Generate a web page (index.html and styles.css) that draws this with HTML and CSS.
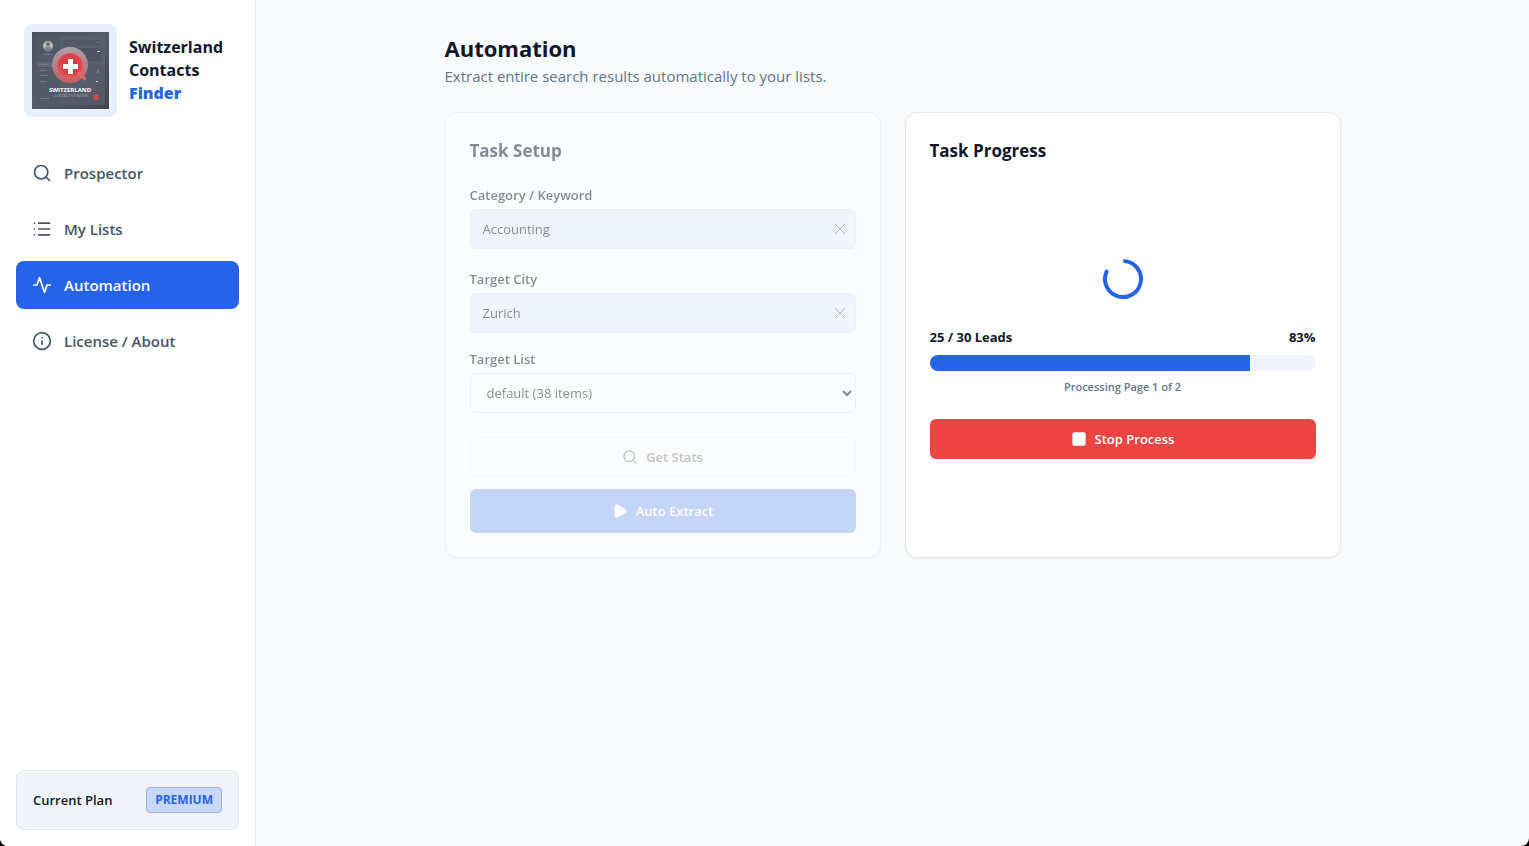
FILE: index.html
```html
<!DOCTYPE html>
<html lang="en">
<head>
<meta charset="UTF-8">
<meta name="viewport" content="width=device-width,initial-scale=1">
<title>Switzerland Contacts Finder</title>
<link rel="stylesheet" href="styles.css">
</head>
<body>
<div class="app">

<aside class="sidebar">
  <div class="brand">
    <div class="brand-logo">
      <svg viewBox="0 0 77 77" width="77" height="77" role="img" aria-label="Switzerland Contacts Finder logo">
        <defs>
          <linearGradient id="lgBg" x1="0" y1="0" x2="1" y2="1">
            <stop offset="0" stop-color="#4b5260"/><stop offset=".5" stop-color="#555b68"/><stop offset="1" stop-color="#40454f"/>
          </linearGradient>
          <radialGradient id="lgRed" cx=".5" cy=".45" r=".6">
            <stop offset="0" stop-color="#d0323a"/><stop offset=".6" stop-color="#dc4248"/><stop offset="1" stop-color="#e4686b"/>
          </radialGradient>
          <linearGradient id="lgGlass" x1="0" y1="0" x2="0" y2="1">
            <stop offset="0" stop-color="#b3acb4" stop-opacity=".9"/><stop offset="1" stop-color="#cf5c61" stop-opacity=".9"/>
          </linearGradient>
        </defs>
        <rect width="77" height="77" fill="url(#lgBg)"/>
        <rect x="4" y="4" width="69" height="69" rx="3" fill="#5c626f" opacity=".6"/>
        <rect x="4" y="4" width="24" height="69" rx="3" fill="#4f5562" opacity=".6"/>
        <rect x="31" y="8" width="37" height="5" rx="1" fill="#525865"/>
        <rect x="31" y="16" width="38" height="13" rx="2" fill="#4d535f"/>
        <rect x="50" y="33" width="19" height="14" rx="2" fill="#555b67"/>
        <rect x="6" y="30" width="18" height="5" rx="1" fill="#626873"/>
        <rect x="4" y="30" width="1" height="5" fill="#a0454e"/>
        <g fill="#737883">
          <rect x="8" y="32" width="8" height="1"/><rect x="8" y="38" width="7" height="1"/>
          <rect x="8" y="43" width="8" height="1"/><rect x="8" y="49" width="7" height="1"/>
          <rect x="8" y="66" width="9" height="1"/><rect x="11" y="22" width="10" height="1"/>
          <rect x="65" y="10" width="2" height="1"/><rect x="65" y="38" width="2" height="3"/>
        </g>
        <rect x="65" y="19" width="3" height="1" fill="#dfe1e5"/>
        <rect x="64" y="49" width="2" height="1" fill="#dfe1e5"/>
        <circle cx="16" cy="14" r="5" fill="#b9bcc2"/>
        <circle cx="16" cy="12" r="2" fill="#7b6a67"/>
        <path d="M12 17.500a4 3 0 0 1 8 0a5 5 0 0 1-8 0z" fill="#7f838c"/>
        <circle cx="38" cy="33" r="18" fill="url(#lgGlass)"/>
        <circle cx="38" cy="34" r="13" fill="url(#lgRed)"/>
        <path d="M47 41l6 6" stroke="#e4666a" stroke-width="3" stroke-linecap="round"/>
        <path d="M36 27h5v5h5v5h-5v5h-5v-5h-5v-5h5z" fill="#fff"/>
        <circle cx="64" cy="65" r="3" fill="#d0474d"/>
        <text class="logo-name" x="38" y="60" text-anchor="middle">SWITZERLAND</text>
        <text class="logo-sub" x="38" y="65" text-anchor="middle">CONTACTS FINDER</text>
      </svg>
    </div>
    <div class="brand-name">Switzerland<br>Contacts<br><span>Finder</span></div>
  </div>

  <nav class="nav">
    <a href="#prospector" class="nav-item">
      <svg class="icon" viewBox="0 0 24 24"><circle cx="11" cy="11" r="8"/><path d="m21 21-4.300-4.300"/></svg>
      Prospector
    </a>
    <a href="#lists" class="nav-item">
      <svg class="icon" viewBox="0 0 24 24"><path d="M8 5h13M8 12h13M8 19h13M3 5h.01M3 12h.01M3 19h.01"/></svg>
      My Lists
    </a>
    <a href="#automation" class="nav-item active">
      <svg class="icon" viewBox="0 0 24 24"><path d="M22 12h-4l-3 9L9 3l-3 9H2"/></svg>
      Automation
    </a>
    <a href="#about" class="nav-item">
      <svg class="icon" viewBox="0 0 24 24"><circle cx="12" cy="12" r="10"/><path d="M12 16v-4M12 8h.01"/></svg>
      License / About
    </a>
  </nav>

  <div class="plan">
    <span class="plan-label">Current Plan</span>
    <span class="plan-badge">PREMIUM</span>
  </div>
</aside>

<main class="main">
  <div class="content">
    <header class="page-head">
      <h1>Automation</h1>
      <p>Extract entire search results automatically to your lists.</p>
    </header>

    <div class="cards">
      <section class="card setup">
        <h2>Task Setup</h2>
        <form class="form">
          <div class="field">
            <label for="category">Category / Keyword</label>
            <div class="input-wrap">
              <input type="text" id="category" value="Accounting">
              <button type="button" class="clear" aria-label="Clear category"><svg viewBox="0 0 10 10" width="10" height="10"><path d="M0 0l10 10M10 0L0 10"/></svg></button>
            </div>
          </div>
          <div class="field">
            <label for="city">Target City</label>
            <div class="input-wrap">
              <input type="text" id="city" value="Zurich">
              <button type="button" class="clear" aria-label="Clear city"><svg viewBox="0 0 10 10" width="10" height="10"><path d="M0 0l10 10M10 0L0 10"/></svg></button>
            </div>
          </div>
          <div class="field">
            <label for="list">Target List</label>
            <select id="list"><option>default (38 items)</option></select>
          </div>
          <div class="actions">
            <button type="button" class="btn btn-outline" disabled>
              <svg class="icon" viewBox="0 0 24 24"><circle cx="11" cy="11" r="8"/><path d="m21 21-4.300-4.300"/></svg>
              Get Stats
            </button>
            <button type="button" class="btn btn-primary" disabled>
              <svg class="icon solid" viewBox="0 0 24 24"><path d="M5 5a2 2 0 0 1 3-1.700l12 7a2 2 0 0 1 0 3.400l-12 7A2 2 0 0 1 5 19z"/></svg>
              Auto Extract
            </button>
          </div>
        </form>
      </section>

      <section class="card">
        <h2>Task Progress</h2>
        <div class="progress">
          <svg class="spinner" viewBox="0 0 24 24"><path d="M13 3.060A9 9 0 1 1 3.800 8.300"/></svg>
          <div class="progress-row"><span>25 / 30 Leads</span><span>83%</span></div>
          <div class="bar"><div class="bar-fill" style="width:83%"></div></div>
          <p class="status">Processing Page 1 of 2</p>
          <button type="button" class="btn btn-stop">
            <svg class="icon solid" viewBox="0 0 24 24"><rect x="3" y="3" width="18" height="18" rx="2"/></svg>
            Stop Process
          </button>
        </div>
      </section>
    </div>
  </div>
</main>

</div>
</body>
</html>
```

FILE: styles.css
```css
:root{
  --brand:#2563eb;
  --bg:#f8fafc;
  --muted:#f1f5f9;
  --border:#e2e8f0;
  --text:#0f172a;
  --text2:#475569;
  --text3:#64748b;
  --danger:#ef4444;
  font-family:"Segoe UI","Open Sans","Noto Sans",sans-serif;
}
*{box-sizing:border-box;margin:0;padding:0}
html{background:#000}
body{color:var(--text);font-size:15px;line-height:24px}
button,input,select{font:inherit;color:inherit}
.app{display:flex;min-height:100vh;background:var(--bg);border-radius:0 0 8px 8px;overflow:hidden}

.icon{width:20px;height:20px;flex:none;fill:none;stroke:currentColor;stroke-width:2;stroke-linecap:round;stroke-linejoin:round}
.icon.solid{fill:currentColor}

/* sidebar */
.sidebar{width:256px;flex:none;background:#fff;border-right:1px solid var(--border);display:flex;flex-direction:column}
.brand{display:flex;align-items:center;gap:12px;padding:24px}
.brand-logo{flex:none;padding:8px;border-radius:8px;background:#e9effd}
.brand-logo svg{display:block}
.logo-name{font-size:6px;font-weight:700;fill:#fff}
.logo-sub{font-size:4px;fill:#a2a6af}
.brand-name{font-size:16px;font-weight:700;line-height:23px}
.brand-name span{color:var(--brand);font-weight:800}

.nav{flex:1;display:flex;flex-direction:column;gap:8px;padding:8px 16px}
.nav-item{display:flex;align-items:center;gap:12px;height:48px;padding:0 16px;border-radius:8px;color:var(--text2);font-weight:600;text-decoration:none}
.nav-item.active{background:var(--brand);color:#fff}

.plan{display:flex;align-items:center;justify-content:space-between;margin:16px;padding:16px;border:1px solid var(--border);border-radius:8px;background:var(--muted)}
.plan-label{font-size:13px;font-weight:600}
.plan-badge{padding:4px 8px;border:1px solid #92b1f5;border-radius:4px;background:#c8d8fa;color:var(--brand);font-size:12px;font-weight:700;line-height:16px}

/* main */
.main{flex:1;padding:32px}
.content{max-width:896px;margin:0 auto}
.page-head{margin-bottom:24px}
h1{font-size:22px;line-height:32px;font-weight:700}
.page-head p{color:var(--text3)}
.cards{display:grid;grid-template-columns:1fr 1fr;gap:24px}
.card{display:flex;flex-direction:column;padding:24px;background:#fff;border:1px solid var(--border);border-radius:12px;box-shadow:0 1px 2px rgba(0,0,0,.05)}
.card h2{font-size:17px;line-height:28px;font-weight:700;margin-bottom:16px}
.setup{opacity:.5}

/* form */
.form{display:flex;flex-direction:column;gap:16px;font-size:13px}
.field{display:flex;flex-direction:column;gap:4px}
.field:first-child{padding:4px 0}
.field label{font-weight:600;line-height:20px}
.input-wrap{position:relative}
.field input,.field select{display:block;width:100%;height:40px;padding:0 12px;border:1px solid var(--border);border-radius:6px;background:#fff}
.field input{background:#e8f0fe;padding-right:36px}
.clear{position:absolute;right:8px;top:12px;width:16px;height:16px;display:flex;align-items:center;justify-content:center;border:none;background:none;color:#64748b}
.clear svg{fill:none;stroke:currentColor;stroke-width:1}
.actions{display:flex;flex-direction:column;gap:12px;padding-top:8px}

.btn{display:flex;align-items:center;justify-content:center;gap:8px;width:100%;height:40px;border:none;border-radius:6px;font-size:13px;font-weight:600;cursor:pointer}
.btn:disabled{opacity:.5;cursor:default}
.btn .icon{width:16px;height:16px}
.btn-outline{background:#fff;border:1px solid var(--border)}
.btn-primary{height:44px;background:var(--brand);color:#fff}
.btn-stop{background:var(--danger);color:#fff}

/* progress */
.progress{flex:1;display:flex;flex-direction:column;align-items:center;justify-content:center}
.spinner{width:48px;height:48px;margin-bottom:24px;fill:none;stroke:var(--brand);stroke-width:2;stroke-linecap:round}
.progress-row{display:flex;justify-content:space-between;width:100%;margin-bottom:8px;font-size:13px;line-height:20px;font-weight:700}
.bar{width:100%;height:16px;border-radius:8px;background:var(--muted);overflow:hidden}
.bar-fill{height:100%;background:var(--brand)}
.status{margin:8px 0 24px;color:var(--text3);font-size:11px;line-height:16px;font-weight:600}
```
